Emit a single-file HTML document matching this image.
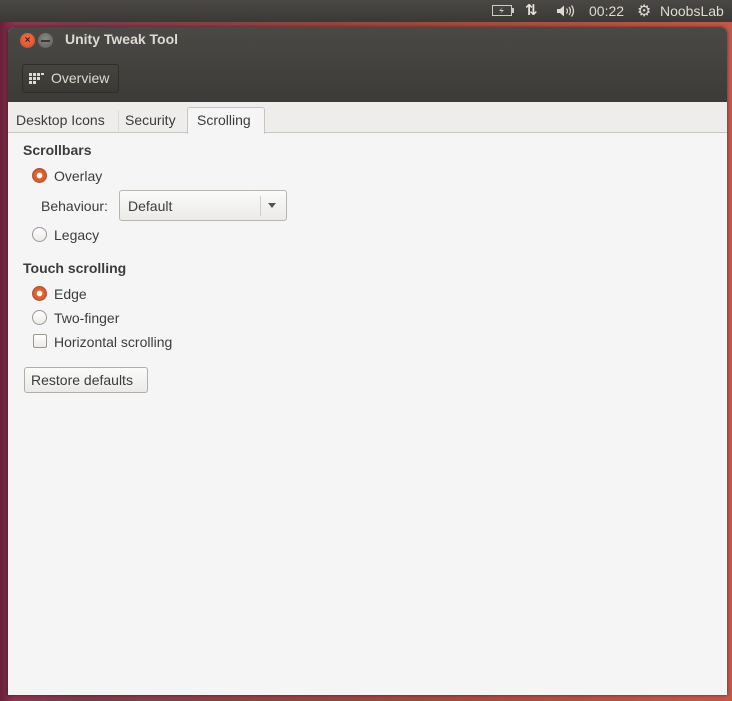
<!DOCTYPE html>
<html><head><meta charset="utf-8"><style>
*{margin:0;padding:0;box-sizing:border-box}
body{width:732px;height:701px;overflow:hidden;position:relative;font-family:"Liberation Sans","DejaVu Sans",sans-serif;background:linear-gradient(90deg,#6a1f3a 0%,#8a3550 2%,#7a3a4a 10%,#a04a40 60%,#c2574a 100%)}
.panel{position:absolute;left:0;top:0;width:732px;height:22px;background:linear-gradient(#4a4844,#3a3935);color:#dfdbd2;font-size:14px}
.panel span{position:absolute;top:3px}
.win{position:absolute;left:8px;top:27px;width:719px;height:668px;background:#f5f5f5;border-radius:6px 6px 0 0;box-shadow:0 0 3px rgba(0,0,0,.5)}
.title{position:absolute;left:0;top:0;width:719px;height:75px;background:linear-gradient(#4a4945,#3c3b37);border-radius:6px 6px 0 0}
.title .t{position:absolute;left:57px;top:4px;color:#dfdbd2;font-weight:bold;font-size:14px}
.btn{position:absolute;top:6px;width:15px;height:15px;border-radius:50%}
.ov{position:absolute;left:14px;top:37px;width:97px;height:29px;border:1px solid #2e2d2a;border-radius:3px;background:linear-gradient(#45443f,#3a3935);color:#dfdbd2;font-size:14px}
.tabs{position:absolute;left:0;top:75px;width:719px;height:31px;background:#eeedeb;border-bottom:1px solid #c8c6c2}
.tab{position:absolute;top:10px;font-size:14px;color:#3c3c3c}
.sel{position:absolute;left:179px;top:5px;width:78px;height:27px;background:#f5f5f5;border:1px solid #c8c6c2;border-bottom:none;border-radius:3px 3px 0 0}
.c{position:absolute;font-size:14px;color:#3c3c3c}
.b{font-weight:bold}
.r{position:absolute;width:15px;height:15px;border-radius:50%;border:1px solid #9a9893;background:linear-gradient(#fff,#eceae6)}
.r.on{border-color:#b0512e;background:radial-gradient(circle,#fff 0 2.5px,#e06a3a 3px,#c75a30 7px)}
.chk{position:absolute;width:14px;height:14px;border:1px solid #9a9893;border-radius:2px;background:linear-gradient(#fff,#eceae6)}
.combo{position:absolute;left:111px;top:163px;width:168px;height:31px;border:1px solid #b8b6b1;border-radius:3px;background:linear-gradient(#fbfbfa,#ebeae8)}
.rb{position:absolute;left:16px;top:340px;width:124px;height:26px;border:1px solid #b0aea9;border-radius:3px;background:linear-gradient(#fbfbfa,#ebeae8)}
</style></head><body>
<div class="panel">
<svg style="position:absolute;left:492px;top:5px" width="22" height="12"><rect x="0.5" y="0.5" width="19" height="10" fill="none" stroke="#cfcbc2"/><rect x="20" y="3" width="2" height="5" fill="#cfcbc2"/><path d="M11 2 L7 6 L10 6 L8 9 L12 5 L9 5 Z" fill="#cfcbc2"/></svg>
<span style="left:525px;top:1px;font-size:15px;font-weight:bold;color:#e8e4dc">⇅</span>
<svg style="position:absolute;left:556px;top:4px" width="20" height="14"><path d="M1 5 H4 L8 1.5 V12.5 L4 9 H1 Z" fill="#dfdbd2"/><path d="M10.5 4.5 Q12.5 7 10.5 9.5 M13 3 Q16 7 13 11 M15.5 1.5 Q19.5 7 15.5 12.5" fill="none" stroke="#dfdbd2" stroke-width="1.2"/></svg>
<span style="left:589px">00:22</span>
<span style="left:637px;top:1px;font-size:16px">⚙</span>
<span style="left:660px">NoobsLab</span>
</div>
<div class="win">
<div class="title">
<div class="btn" style="left:12px;background:radial-gradient(circle at 50% 40%,#f3734a,#d2461f);font-size:10px;color:#4a1a0a;text-align:center;line-height:15px;font-weight:bold">×</div>
<div class="btn" style="left:30px;background:radial-gradient(circle at 50% 40%,#8a8883,#5e5d59)"><div style="position:absolute;left:3px;top:7px;width:9px;height:2px;background:#3a3935"></div></div>
<div class="t">Unity Tweak Tool</div>
<div class="ov"><svg style="position:absolute;left:6px;top:8px" width="16" height="12"><g fill="#dfdbd2"><rect x="0" y="0" width="3" height="3"/><rect x="4" y="0" width="3" height="3"/><rect x="8" y="0" width="3" height="3"/><rect x="12" y="0" width="3" height="2"/><rect x="0" y="4" width="3" height="3"/><rect x="4" y="4" width="3" height="3"/><rect x="8" y="4" width="3" height="3"/><rect x="0" y="8" width="3" height="3"/><rect x="4" y="8" width="3" height="3"/></g></svg><span style="position:absolute;left:28px;top:5px">Overview</span></div>
</div>
<div class="tabs">
<div class="sel"></div>
<div class="tab" style="left:8px">Desktop Icons</div>
<div style="position:absolute;left:110px;top:9px;width:1px;height:20px;background:#dcdad6"></div>
<div class="tab" style="left:117px">Security</div>
<div class="tab" style="left:189px">Scrolling</div>
</div>
<div class="c b" style="left:15px;top:115px">Scrollbars</div>
<div class="r on" style="left:24px;top:141px"></div><div class="c" style="left:46px;top:141px">Overlay</div>
<div class="c" style="left:33px;top:171px">Behaviour:</div>
<div class="combo"><span class="c" style="left:8px;top:7px">Default</span><div style="position:absolute;left:140px;top:5px;width:1px;height:20px;background:#d0cec9"></div><div style="position:absolute;left:148px;top:12px;border-left:4px solid transparent;border-right:4px solid transparent;border-top:5px solid #555"></div></div>
<div class="r" style="left:24px;top:200px"></div><div class="c" style="left:46px;top:200px">Legacy</div>
<div class="c b" style="left:15px;top:233px">Touch scrolling</div>
<div class="r on" style="left:24px;top:259px"></div><div class="c" style="left:46px;top:259px">Edge</div>
<div class="r" style="left:24px;top:283px"></div><div class="c" style="left:46px;top:283px">Two-finger</div>
<div class="chk" style="left:25px;top:307px"></div><div class="c" style="left:46px;top:307px">Horizontal scrolling</div>
<div class="rb"><span class="c" style="left:6px;top:4px">Restore defaults</span></div>
</div>
</body></html>
